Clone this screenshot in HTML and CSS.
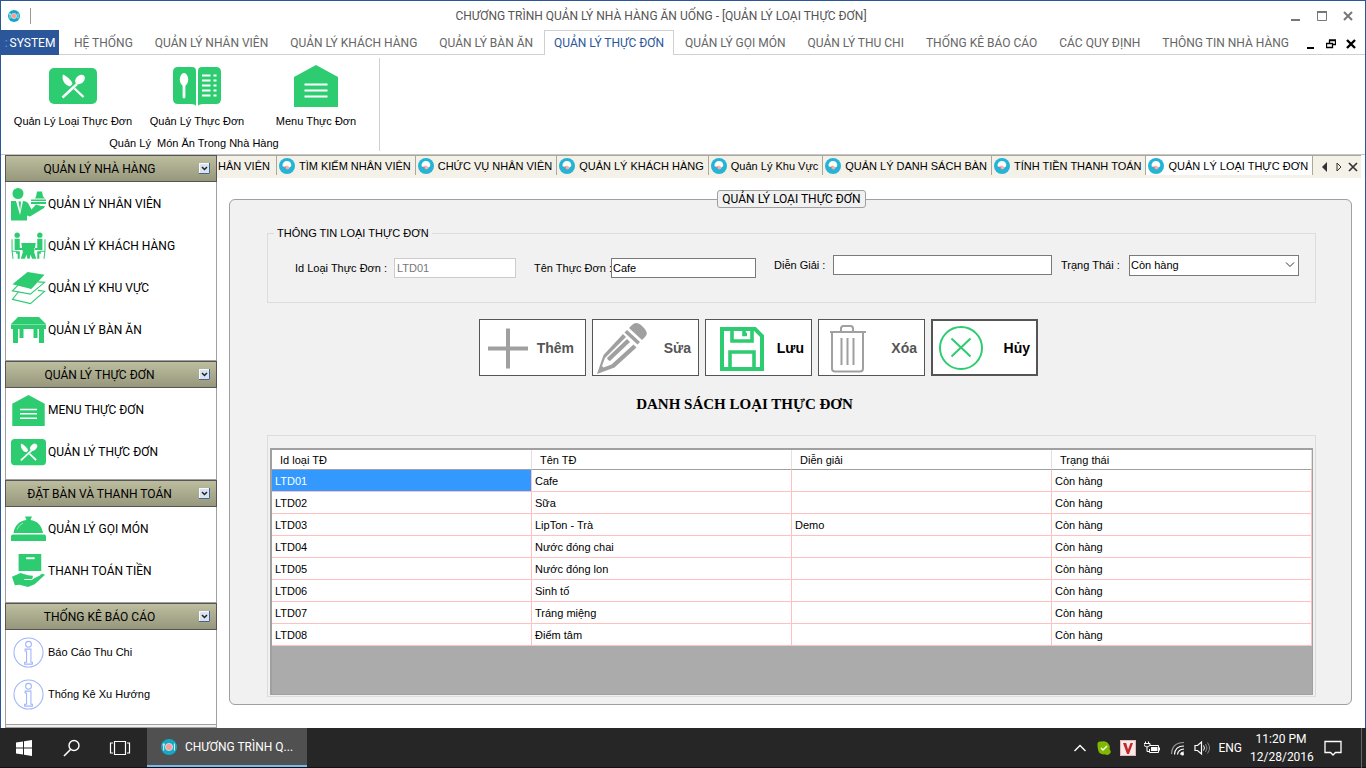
FILE: index.html
```html
<!DOCTYPE html>
<html lang="vi">
<head>
<meta charset="utf-8">
<meta name="viewport" content="width=device-width, initial-scale=1">
<title>Quản lý loại thực đơn</title>
<link rel="stylesheet" href="styles.css">
</head>
<body>
<svg class="sprite" aria-hidden="true">
  <symbol id="i-plate" viewBox="0 0 16 16">
    <circle cx="8" cy="8" r="8" fill="#12a9c9"/>
    <circle cx="8" cy="8" r="3.6" fill="#f4a09a" stroke="#e9dedb" stroke-width=".8"/>
    <path d="M2.2 4.5v2.2M3.2 4.5v2.2M2.7 6.5v5M13.4 4.5v7" stroke="#fff" stroke-width=".9"/>
  </symbol>
  <symbol id="i-doc" viewBox="0 0 16 16">
    <circle cx="8" cy="8" r="8" fill="#25b3d6"/>
    <path d="M3.6 8.2a4.2 4.2 0 0 1 8.6-1.8c.3 1.3-.3 2.300-1.300 2.800l-2.600.8z" fill="#fff"/>
    <path d="M4.500 8.700l3-1.200 3 1.500-.5 2-2 .6z" fill="#eeb3ad"/>
    <path d="M5.600 9l1 1.200" stroke="#d33" stroke-width=".8"/>
  </symbol>
  <symbol id="i-knife" viewBox="0 0 48 36">
    <rect width="48" height="36" rx="5" fill="#2ecc71"/>
    <path d="M14 6.500c4 2 8.500 5.500 9.500 9.500l-2.500 2.500-3-1.200C14.500 15 12.500 10 14 6.500z" fill="#fff"/>
    <path d="M13.500 29.500L28 16M25.500 20.500l9 8.500" stroke="#fff" stroke-width="2.400" fill="none"/>
    <ellipse cx="31" cy="11.500" rx="4" ry="5.600" transform="rotate(45 31 11.500)" fill="#fff"/>
  </symbol>
  <symbol id="i-book" viewBox="0 0 48 40">
    <path d="M5 1h14q4 0 4 4v35q-1-2-5-2H5q-5 0-5-5V6q0-5 5-5z" fill="#2ecc71"/>
    <path d="M43 1H29q-4 0-4 4v35q1-2 5-2h13q5 0 5-5V6q0-5-5-5z" fill="#2ecc71"/>
    <ellipse cx="11" cy="13.500" rx="4.200" ry="6.500" fill="#fff"/>
    <path d="M11 18v13" stroke="#fff" stroke-width="2.800" stroke-linecap="round"/>
    <path d="M29 9.500h8.500m3 0h3M29 14.500h8.500m3 0h3M29 19.500h8.500m3 0h3M29 24.500h8.500m3 0h3M29 29.500h8.500m3 0h3" stroke="#fff" stroke-width="2"/>
  </symbol>
  <symbol id="i-house" viewBox="0 0 44 42">
    <path d="M0 12L22 0l22 12v30H0z" fill="#2ecc71"/>
    <path d="M10.500 19.500h23M10.500 25.500h23M10.500 31.500h23" stroke="#fff" stroke-width="2"/>
  </symbol>
  <symbol id="i-waiter" viewBox="0 0 35 33">
    <circle cx="7" cy="6" r="5.500" fill="#2ecc71"/>
    <path d="M0 13.500h5l4 14 3-14q3 0 5 2l3.500 6.500L25 17l5 1.500h4l-1 2L19 29l-3-1v5H0z" fill="#2ecc71"/>
    <path d="M7.500 14h2.500l-.8 9z" fill="#2ecc71"/>
    <path d="M25 9l1-5h5l1 5 2 2H24zM20 12h15v1.500H20zM20 14.500h15v2H20z" fill="#2ecc71"/>
  </symbol>
  <symbol id="i-guests" viewBox="0 0 34 27">
    <g fill="#2ecc71">
      <circle cx="6" cy="3" r="2.600"/><circle cx="28" cy="3" r="2.600"/>
      <path d="M3.500 6.500h5v9h3v2h-8zM30.500 6.500h-5v9h-3v2h8zM10 10.500h14l-1.500 9 2 6.500h-4l-1.500-4-1 4h-2l-1-4-1.500 4h-4l2-6.500z"/>
      <path d="M5 18.500h3.500V26H6.500v-5H5zM29 18.500h-3.500V26h2v-5H29z"/>
    </g>
    <path d="M1 7v11l1 8M33 7v11l-1 8M1.500 18.500H6M32.500 18.500H28" stroke="#2ecc71" fill="none"/>
  </symbol>
  <symbol id="i-layers" viewBox="0 0 36 36">
    <path d="M1 14L17 1l18 3-14 15z" fill="#2ecc71"/>
    <path d="M7 15l-6 6 19 3.500L35 12l-7-.500M7 22.500L1 30l19 4.500L35 21.500l-7-1" fill="none" stroke="#2ecc71" stroke-width="1.200"/>
  </symbol>
  <symbol id="i-table" viewBox="0 0 35 28">
    <path d="M7 1h21l7 7v5H0V8zM2 13h5v14H2zM8.500 13h4v9h-4zM22.500 13h4v9h-4zM28 13h5v14h-5z" fill="#2ecc71"/>
    <path d="M0 8.500h35" stroke="#8fe3b3" stroke-width=".8"/>
  </symbol>
  <symbol id="i-cloche" viewBox="0 0 35 25">
    <path d="M14 0h7l-1.500 3.500c7 .8 11.500 6 12.500 13H2.500C3.500 9.500 8 4.300 15.500 3.500zM2 18h31q2 0 2 2v4.500H0V20q0-2 2-2z" fill="#2ecc71"/>
    <path d="M6 13q2-5 6-6.500" stroke="#a3e8c1" fill="none"/>
  </symbol>
  <symbol id="i-pay" viewBox="0 0 35 36">
    <rect x="7" width="24" height="18" fill="#2ecc71"/>
    <path d="M15 4.500h9" stroke="#fff" stroke-width="2"/>
    <path d="M0 24l9-4 8 2.500 5 .5q1 3-3 3h-5 8l10-5 3 1-11 10-7 3-9-2.500-5 .5z" fill="#2ecc71"/>
    <path d="M13 27h8l3-2 6-3" stroke="#fff" fill="none"/>
  </symbol>
  <symbol id="i-info" viewBox="0 0 32 32">
    <g fill="none" stroke="#a0b5fa" stroke-width="1.100"><circle cx="16" cy="16" r="15"/><circle cx="16" cy="7.500" r="3"/><path d="M12.500 12.500h6V26H20v2h-8v-2h2V14.500h-1.500z"/></g>
  </symbol>
  <symbol id="i-drop" viewBox="0 0 11 11">
    <rect x=".5" y=".5" width="10" height="10" fill="#d9e4f3" stroke="#f7faff"/>
    <path d="M0 10.500h10.500V0" stroke="#47648f" fill="none"/>
    <path d="M3 4l2.500 2.500L8 4" stroke="#222" stroke-width="1.500" fill="none"/>
  </symbol>
</svg>

<div class="window">
  <header class="titlebar">
    <svg class="app-icon"><use href="#i-plate"/></svg>
    <h1 class="title">CHƯƠNG TRÌNH QUẢN LÝ NHÀ HÀNG ĂN UỐNG - [QUẢN LÝ LOẠI THỰC ĐƠN]</h1>
    <div class="winctl">
      <button aria-label="Thu nhỏ"><svg viewBox="0 0 10 10"><path d="M0 9h9" stroke="#777" stroke-width="2"/></svg></button>
      <button aria-label="Phóng to"><svg viewBox="0 0 10 10"><path d="M.5 1h9v8.500h-9z" fill="none" stroke="#777"/><path d="M0 1h10" stroke="#777" stroke-width="2"/></svg></button>
      <button aria-label="Đóng"><svg viewBox="0 0 10 10"><path d="M1 1l8 8M9 1L1 9" stroke="#777" stroke-width="2"/></svg></button>
    </div>
  </header>

  <nav class="ribbon-tabs">
    <button class="system"><span class="grip">:</span>SYSTEM</button>
    <a href="#">HỆ THỐNG</a><a href="#">QUẢN LÝ NHÂN VIÊN</a><a href="#">QUẢN LÝ KHÁCH HÀNG</a><a href="#">QUẢN LÝ BÀN ĂN</a><a href="#" class="active">QUẢN LÝ THỰC ĐƠN</a><a href="#">QUẢN LÝ GỌI MÓN</a><a href="#">QUẢN LÝ THU CHI</a><a href="#">THỐNG KÊ BÁO CÁO</a><a href="#">CÁC QUY ĐỊNH</a><a href="#">THÔNG TIN NHÀ HÀNG</a>
    <div class="mdictl">
      <button aria-label="Thu nhỏ trang"><svg viewBox="0 0 10 10"><path d="M1 9h7" stroke="#000" stroke-width="2"/></svg></button>
      <button aria-label="Khôi phục trang"><svg viewBox="0 0 10 10"><path d="M3.500 4V1.500h6v4H7M.5 4.500h6v4h-6zM3 1h7M0 4.500h7" fill="none" stroke="#000" stroke-width="1.300"/></svg></button>
      <button aria-label="Đóng trang"><svg viewBox="0 0 10 10"><path d="M1 1l8 8M9 1L1 9" stroke="#000" stroke-width="2.400"/></svg></button>
    </div>
  </nav>

  <section class="ribbon">
    <div class="ribbon-group">
      <div class="ribbon-items">
        <button><svg class="ic-knife"><use href="#i-knife"/></svg><span>Quản Lý Loại Thực Đơn</span></button>
        <button><svg class="ic-book"><use href="#i-book"/></svg><span>Quản Lý Thực Đơn</span></button>
        <button class="narrow"><svg class="ic-house"><use href="#i-house"/></svg><span>Menu Thực Đơn</span></button>
      </div>
      <div class="ribbon-caption">Quản Lý&nbsp; Món Ăn Trong Nhà Hàng</div>
    </div>
  </section>

  <div class="body">
    <aside class="sidebar">
      <section class="group">
        <h2><span>QUẢN LÝ NHÀ HÀNG</span><svg><use href="#i-drop"/></svg></h2>
        <ul>
          <li><a href="#"><svg><use href="#i-waiter"/></svg>QUẢN LÝ NHÂN VIÊN</a></li>
          <li><a href="#"><svg><use href="#i-guests"/></svg>QUẢN LÝ KHÁCH HÀNG</a></li>
          <li><a href="#"><svg><use href="#i-layers"/></svg>QUẢN LÝ KHU VỰC</a></li>
          <li><a href="#"><svg><use href="#i-table"/></svg>QUẢN LÝ BÀN ĂN</a></li>
        </ul>
      </section>
      <section class="group tight">
        <h2><span>QUẢN LÝ THỰC ĐƠN</span><svg><use href="#i-drop"/></svg></h2>
        <ul>
          <li><a href="#"><svg class="small"><use href="#i-house"/></svg>MENU THỰC ĐƠN</a></li>
          <li><a href="#"><svg><use href="#i-knife"/></svg>QUẢN LÝ THỰC ĐƠN</a></li>
        </ul>
      </section>
      <section class="group loose">
        <h2><span>ĐẶT BÀN VÀ THANH TOÁN</span><svg><use href="#i-drop"/></svg></h2>
        <ul>
          <li><a href="#"><svg><use href="#i-cloche"/></svg>QUẢN LÝ GỌI MÓN</a></li>
          <li><a href="#"><svg><use href="#i-pay"/></svg>THANH TOÁN TIỀN</a></li>
        </ul>
      </section>
      <section class="group">
        <h2><span>THỐNG KÊ BÁO CÁO</span><svg><use href="#i-drop"/></svg></h2>
        <ul>
          <li><a href="#" class="mixed"><svg class="small"><use href="#i-info"/></svg>Báo Cáo Thu Chi</a></li>
          <li><a href="#" class="mixed"><svg class="small"><use href="#i-info"/></svg>Thống Kê Xu Hướng</a></li>
        </ul>
      </section>
      <div class="rest"></div>
    </aside>

    <main class="main">
      <nav class="docbar">
        <div class="doctabs">
          <a href="#" class="partial" aria-label="QUẢN LÝ NHÂN VIÊN">HÂN VIÊN</a><a href="#"><svg><use href="#i-doc"/></svg>TÌM KIẾM NHÂN VIÊN</a><a href="#"><svg><use href="#i-doc"/></svg>CHỨC VỤ NHÂN VIÊN</a><a href="#"><svg><use href="#i-doc"/></svg>QUẢN LÝ KHÁCH HÀNG</a><a href="#"><svg><use href="#i-doc"/></svg>Quản Lý Khu Vực</a><a href="#"><svg><use href="#i-doc"/></svg>QUẢN LÝ DANH SÁCH BÀN</a><a href="#"><svg><use href="#i-doc"/></svg>TÍNH TIỀN THANH TOÁN</a><a href="#" class="current"><svg><use href="#i-doc"/></svg>QUẢN LÝ LOẠI THỰC ĐƠN</a>
        </div>
        <div class="docctl">
          <button aria-label="Trước"><svg viewBox="0 0 10 10"><path d="M7 0v10L2 5z" fill="#333"/></svg></button>
          <button aria-label="Sau"><svg viewBox="0 0 10 10"><path d="M3 1v8l4-4z" fill="none" stroke="#333"/></svg></button>
          <button aria-label="Đóng tab"><svg viewBox="0 0 10 10"><path d="M1 1l8 8M9 1L1 9" stroke="#333" stroke-width="1.700"/></svg></button>
        </div>
      </nav>

      <fieldset class="panel">
        <legend>QUẢN LÝ LOẠI THỰC ĐƠN</legend>
        <fieldset class="box info">
          <legend>THÔNG TIN LOẠI THỰC ĐƠN</legend>
          <div class="fields">
            <div class="field low f-id"><label for="f-id">Id Loại Thực Đơn :</label><input id="f-id" type="text" value="LTD01" disabled></div>
            <div class="field low f-name"><label for="f-name">Tên Thực Đơn :</label><input id="f-name" type="text" value="Cafe"></div>
            <div class="field f-desc"><label for="f-desc">Diễn Giải :</label><input id="f-desc" type="text"></div>
            <div class="field f-state"><label for="f-state">Trạng Thái :</label><select id="f-state"><option>Còn hàng</option><option>Hết hàng</option></select></div>
          </div>
        </fieldset>

        <div class="actions">
          <button class="off near"><svg viewBox="0 0 54 54"><path d="M8 27.500h40M28 7.500v40" stroke="#a0a0a0" stroke-width="4"/></svg><span>Thêm</span></button>
          <button class="off"><svg viewBox="0 0 54 54"><g fill="#a0a0a0"><path d="M39 4q4-4 9 0l3 3q5 5 1 9l-3 3-13-12z"/><path d="M34 9l13 12-2.500 2.500-13-12z"/><path d="M30 13l3 3-21 21-3 8 1.500 1.500 8-3 22-20 3 3-22 20L4 53l6.500-19z"/><path d="M34 18l3 3-20 19-2-1-1-2z"/></g></svg><span>Sửa</span></button>
          <button><svg viewBox="0 0 54 54"><path d="M16 8v40h40V15l-7-7z" fill="none" stroke="#2ecc71" stroke-width="4"/><path d="M26 8v12h20V8M38 8v5.500h3M24 47V31h24v16" fill="none" stroke="#2ecc71" stroke-width="3.600"/></svg><span>Lưu</span></button>
          <button class="off"><svg viewBox="0 0 54 54"><g fill="none" stroke="#a0a0a0" stroke-width="2"><path d="M11 11h36M13 11.500v36q0 3 3 3h25q3 0 3-3v-36M22 10.500v-3Q22 5 24.500 5h7Q34 5 34 7.500v3M22.500 17v27M28.500 17v27M34.500 17v27"/></g></svg><span>Xóa</span></button>
          <button class="focus"><svg viewBox="0 0 54 54"><g fill="none" stroke="#2ecc71" stroke-width="2"><circle cx="29" cy="27" r="21"/><path d="M19.500 17.500l19 18M38.500 17.500l-19 18"/></g></svg><span>Hủy</span></button>
        </div>

        <h2 class="list-title">DANH SÁCH LOẠI THỰC ĐƠN</h2>

        <div class="box list">
          <div class="grid-view">
            <table>
              <thead><tr><th>Id loại TĐ</th><th>Tên TĐ</th><th>Diễn giải</th><th>Trạng thái</th></tr></thead>
              <tbody>
                <tr><td class="sel">LTD01</td><td>Cafe</td><td></td><td>Còn hàng</td></tr>
                <tr><td>LTD02</td><td>Sữa</td><td></td><td>Còn hàng</td></tr>
                <tr><td>LTD03</td><td>LipTon - Trà</td><td>Demo</td><td>Còn hàng</td></tr>
                <tr><td>LTD04</td><td>Nước đóng chai</td><td></td><td>Còn hàng</td></tr>
                <tr><td>LTD05</td><td>Nước đóng lon</td><td></td><td>Còn hàng</td></tr>
                <tr><td>LTD06</td><td>Sinh tố</td><td></td><td>Còn hàng</td></tr>
                <tr><td>LTD07</td><td>Tráng miệng</td><td></td><td>Còn hàng</td></tr>
                <tr><td>LTD08</td><td>Điểm tâm</td><td></td><td>Còn hàng</td></tr>
              </tbody>
            </table>
          </div>
        </div>
      </fieldset>
    </main>
  </div>
</div>

<footer class="taskbar">
  <button class="tb" aria-label="Start"><svg viewBox="0 0 18 18"><path d="M1 3.500l7-1v6H1zM9 2.300l8-1.300v7.500H9zM1 9.500h7v6l-7-1zM9 9.500h8V17l-8-1.300z" fill="#fff"/></svg></button>
  <button class="tb" aria-label="Tìm kiếm"><svg viewBox="0 0 18 18"><circle cx="11" cy="6.500" r="5" fill="none" stroke="#fff" stroke-width="1.400"/><path d="M7.500 10.500L1 17" stroke="#fff" stroke-width="1.600"/></svg></button>
  <button class="tb" aria-label="Task View"><svg class="wide" viewBox="0 0 22 18"><path d="M5.500 2.500h11v13h-11zM4 4H1.500v10H4M18 4h2.500v10H18" fill="none" stroke="#fff" stroke-width="1.200"/></svg></button>
  <button class="task"><svg><use href="#i-plate"/></svg>CHƯƠNG TRÌNH Q...</button>
  <div class="tray">
    <svg viewBox="0 0 16 16"><path d="M2.500 11L8 5.500l5.500 5.500" fill="none" stroke="#fff" stroke-width="1.400"/></svg>
    <svg viewBox="0 0 16 16"><path d="M1.500 5Q1 1 5 1.500q6-1.500 8.500 4 .5 2 0 3.500 2.500 3 0 5-2.500 2-4.500.3Q3 15 2 9.500 1.500 7 1.500 5z" fill="#7fba00"/><path d="M5 8l2 2 4-4" stroke="#fff" stroke-width="1.400" fill="none"/></svg>
    <svg viewBox="0 0 16 16"><path d="M0 0h16v16H0z" fill="#e8b4b4"/><path d="M1 1h14v14H1z" fill="#f7eaea"/><path d="M3 3h3.200L8 9.500 10.500 3H13L9 14H7z" fill="#c22a2a"/></svg>
    <svg viewBox="0 0 16 16"><path d="M6 5.500h8.500v7h-9V9M15.500 7.500v3" fill="none" stroke="#fff"/><path d="M7 7h6.500v4H7z" fill="#fff"/><path d="M1.500 1.500v2M4.500 1.500v2M0 3.500h6v2q-3 3-6 0zM3 7v4.500h2" fill="none" stroke="#fff"/></svg>
    <svg class="gap" viewBox="0 0 16 16"><g fill="none" stroke-width="1.200"><path d="M1.500 14Q2 2.500 14 2.500" stroke="#999"/><path d="M4.500 14.500Q5 6 14 6M7.500 14.500Q8 9.500 14 9" stroke="#fff"/><path d="M10.500 14.500Q11 12 14 12" stroke="#fff"/></g><circle cx="12.500" cy="14" r="1.500" fill="#fff"/></svg>
    <svg viewBox="0 0 16 16"><path d="M1 5.500h2.500L7.500 2v12l-4-3.500H1z" fill="none" stroke="#fff" stroke-width="1.200"/><path d="M9.500 5.500q2 2.500 0 5" fill="none" stroke="#fff"/><path d="M11.500 4q3 4 0 8M13.500 2.500q4 5.500 0 11" fill="none" stroke="#888"/></svg>
    <span class="lang">ENG</span>
    <span class="clock">11:20 PM<br>12/28/2016</span>
    <svg class="note" viewBox="0 0 18 18"><path d="M1 2.500h16v11h-5.500L9 16l-2.500-2.500H1z" fill="none" stroke="#fff" stroke-width="1.300"/></svg>
    <i class="peek"></i>
  </div>
</footer>
</body>
</html>
```

FILE: styles.css
```css
* { box-sizing: border-box; }
body {
  margin: 0;
  height: 100vh;
  display: flex;
  flex-direction: column;
  background: #fff;
  color: #000;
  font: 11px/16px "Liberation Sans", Arial, sans-serif;
}
button, input, select { font: inherit; color: inherit; }
button { border: 0; padding: 0; background: none; }
a { color: inherit; text-decoration: none; white-space: nowrap; }
h1, h2, ul { margin: 0; padding: 0; font: inherit; list-style: none; }
svg { display: block; flex: none; }
.sprite { display: none; }

.titlebar, .ribbon-tabs, .sidebar, .panel > legend, .taskbar { font: 12px/16px Roboto, sans-serif; }

.window {
  flex: 1;
  min-height: 0;
  display: flex;
  flex-direction: column;
  border: 1px solid #2b579a;
  border-bottom: 0;
}
.titlebar { height: 29px; display: flex; align-items: center; padding: 0 12px 0 7px; color: #555; }
.app-icon { width: 12px; height: 12px; }
.title { flex: 1; margin-left: 10px; border-left: 1px solid #999; text-align: center; }
.winctl, .mdictl { display: flex; }
.winctl { gap: 16px; }
.winctl svg, .mdictl svg { width: 10px; height: 10px; }

.ribbon-tabs { height: 25px; display: flex; border-bottom: 1px solid #d0d0d0; color: #666; }
.ribbon-tabs a { padding: 5px 11px 0; }
.system { width: 58px; height: 25px; background: #2b579a; color: #fff; margin-right: 4px; white-space: nowrap; }
.grip { color: #6d9ae0; margin-right: 2px; }
.ribbon-tabs .active { height: 25px; border: 1px solid #d0d0d0; border-bottom: 0; background: #fff; color: #2b579a; padding: 4px 9px 0; }
.mdictl { margin-left: auto; align-items: center; padding: 4px 9px 0 0; gap: 10px; }

.ribbon { height: 100px; padding: 3px 0 3px 10px; border-bottom: 1px solid #c6c6c6; }
.ribbon-group { width: 369px; height: 93px; border-right: 1px solid #d0d0d0; display: flex; flex-direction: column; justify-content: space-between; }
.ribbon-items { display: flex; }
.ribbon-items button { width: 124px; height: 71px; display: flex; flex-direction: column; align-items: center; justify-content: space-between; white-space: nowrap; }
.ribbon-items .narrow { width: 114px; }
.ribbon-items svg { margin-top: 7px; }
.ic-knife { width: 48px; height: 42px; }
.ic-book { width: 48px; height: 42px; }
.ic-house { width: 44px; height: 42px; }
.ribbon-caption { width: 366px; text-align: center; }

.body { flex: 1; min-height: 0; display: flex; padding: 0 4px; }
.sidebar { flex: none; width: 212px; display: flex; flex-direction: column; overflow: hidden; }
.group { border: 1px solid #a0a0a0; border-top: 0; padding-bottom: 9px; }
.group.tight { padding-bottom: 6px; }
.group.loose { padding-bottom: 10px; }
.group h2 {
  height: 27px;
  margin: 0 -1px 1px;
  display: flex;
  align-items: center;
  padding: 0 6px 0 0;
  border: 1px solid #555;
  background: linear-gradient(#bdbd9f, #97977c);
}
.group h2 span { flex: 1; text-align: center; padding-right: 6px; }
.group h2 svg { width: 11px; height: 11px; }
.group a { height: 42px; display: flex; align-items: center; padding-left: 5px; gap: 2px; }
.group a svg { width: 35px; height: 34px; }
.group a .small { height: 31px; }
.group .mixed { font: 11px/16px "Liberation Sans", Arial, sans-serif; }
.rest { flex: 1; border: 1px solid #a0a0a0; border-top: 0; background: #f1f1f1; }

.main { flex: 1; min-width: 0; display: flex; flex-direction: column; }
.docbar { height: 23px; display: flex; background: #f4f1e8; border-top: 1px solid #aca899; }
.doctabs { flex: 1; min-width: 0; display: flex; overflow: hidden; }
.doctabs a { flex: 1 0 auto; height: 19px; display: flex; align-items: center; gap: 4px; padding: 0 3px 0 2px; border-right: 1px solid #aca899; }
.doctabs .partial { padding: 0 5px 0 1px; }
.doctabs svg { width: 16px; height: 16px; }
.doctabs .current { background: #fff; }
.docctl { width: 48px; display: flex; align-items: center; justify-content: flex-end; gap: 4px; padding-right: 3px; }
.docctl svg { width: 10px; height: 10px; }

.panel {
  flex: 1;
  min-width: 0;
  min-height: 0;
  margin: 12px 9px 23px 12px;
  padding: 17px 35px 7px 37px;
  border: 1px solid #a0a0a0;
  border-radius: 6px;
  background: #f1f1f1;
  display: flex;
  flex-direction: column;
}
.panel > legend { margin: 0 auto; padding: 0 4px; border: 1px solid #a0a0a0; border-radius: 3px; background: #f1f1f1; }
.box { min-width: 0; margin: 0; border: 1px solid #dcdcdc; }
.info { padding: 14px 16px 24px 27px; }
.info > legend { margin-left: -21px; padding: 0 3px; }
.fields { display: flex; height: 23px; }
.field { display: flex; align-items: center; height: 20px; white-space: nowrap; }
.field.low { align-self: flex-end; }
.field input, .field select { flex: 1; min-width: 0; width: 0; height: 20px; border: 1px solid #7a7a7a; background: #fff; padding: 0 1px; border-radius: 0; }
.field input:disabled { border-color: #ccc; color: #777; padding-left: 2px; }
.field label { flex: none; }
.f-id { flex: 221; margin-right: 18px; }
.f-id label { width: 99px; }
.f-name { flex: 222; margin-right: 18px; }
.f-name label { width: 77px; }
.f-desc { flex: 278; margin-right: 9px; }
.f-desc label { width: 59px; }
.f-state { flex: 238; }
.f-state label { width: 68px; }
.field select {
  height: 21px;
  appearance: none;
  background: #fff url("data:image/svg+xml,%3Csvg xmlns='http://www.w3.org/2000/svg' width='10' height='6'%3E%3Cpath d='M1 .5l4 4 4-4' fill='none' stroke='%23333'/%3E%3C/svg%3E") no-repeat right 3px center;
}

.actions { display: flex; justify-content: center; gap: 6px; padding: 16px 66px 0 0; }
.actions button { width: 107px; height: 57px; display: flex; align-items: center; justify-content: space-between; border: 1px solid #555; background: #fff; padding: 0 7px 0 0; }
.actions .near { padding-right: 11px; }
.actions .focus { border-width: 2px; padding-right: 6px; }
.actions svg { width: 54px; height: 54px; overflow: visible; }
.actions .focus svg { margin-left: -1px; }
.actions span { font: bold 14px/18px "Liberation Sans", sans-serif; }
.off { color: #555; }
.list-title { margin: 19px 94px 0 0; font: bold 15px/18px "Liberation Serif", serif; text-align: center; }

.list { flex: 1; min-height: 0; margin-top: 22px; padding: 12px 2px 1px; display: flex; }
.grid-view { flex: 1; background: #ababab; border: 1px solid #a0a0a0; border-width: 2px 1px 1px 2px; }
table { width: 100%; border-collapse: separate; border-spacing: 0; table-layout: fixed; }
th, td { font-weight: normal; text-align: left; background: #fff; border-right: 1px solid #ffc0c0; border-bottom: 1px solid #ffc0c0; padding: 0 3px; height: 22px; line-height: 18px; }
th { height: 20px; padding: 0 8px; border-right-color: #e0e0e0; border-bottom-color: #a0a0a0; }
td.sel { background: #3399ff; color: #fff; }

.taskbar { flex: none; height: 40px; display: flex; background: #262626; color: #fff; border-bottom: 1px solid #10101a; }
.tb { width: 48px; display: flex; align-items: center; justify-content: center; }
.tb svg { width: 18px; height: 18px; }
.tb .wide { width: 22px; }
.task { width: 160px; margin-left: 3px; display: flex; align-items: center; gap: 8px; padding-left: 14px; background: #505050; border-bottom: 2px solid #76b9ed; }
.task svg { width: 16px; height: 16px; }
.tray { margin-left: auto; display: flex; align-items: center; gap: 8px; }
.tray svg { width: 16px; height: 16px; }
.tray .gap { margin-left: 2px; }
.clock { width: 62px; text-align: center; line-height: 18px; }
.tray .note { width: 18px; height: 18px; margin-left: 4px; }
.peek { width: 1px; height: 40px; margin: 0 4px 0 11px; background: #666; }
```
